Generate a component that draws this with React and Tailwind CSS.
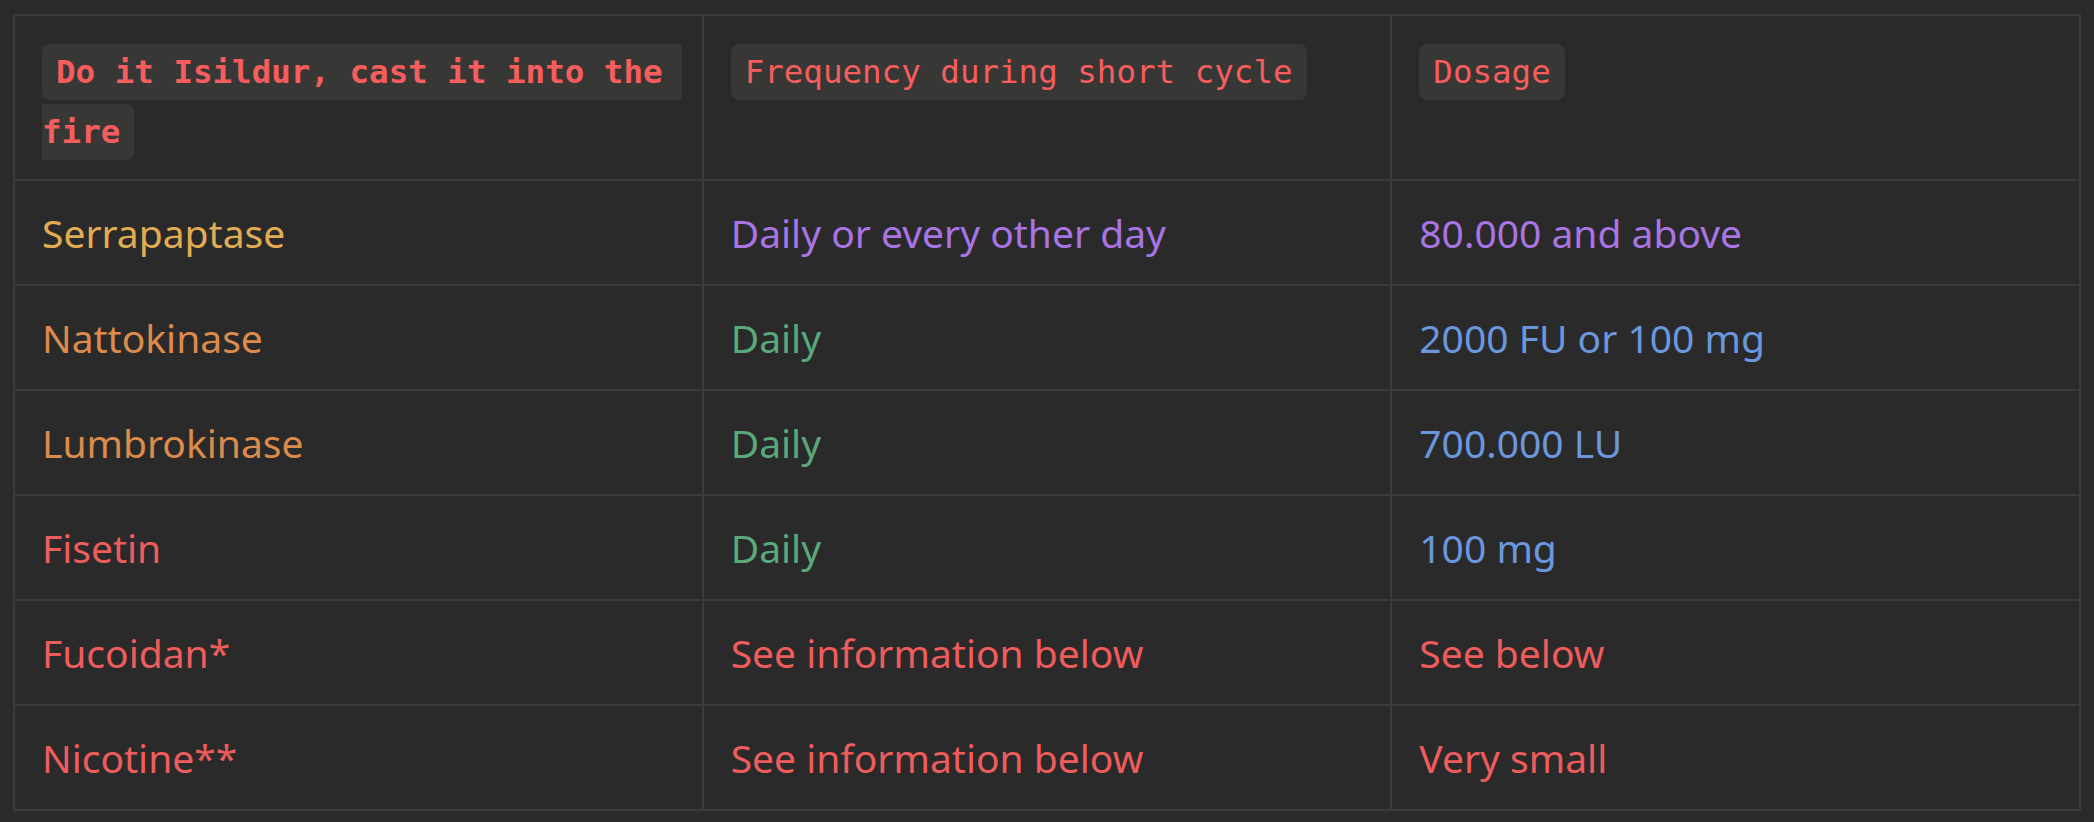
const rows = [
    { name: 'Serrapaptase', nameColor: 'text-[#e2ac52]', freq: 'Daily or every other day', freqColor: 'text-[#a974e3]', dose: '80.000 and above', doseColor: 'text-[#a974e3]' },
    { name: 'Nattokinase', nameColor: 'text-[#dd8a4d]', freq: 'Daily', freqColor: 'text-[#5aa97a]', dose: '2000 FU or 100 mg', doseColor: 'text-[#6a97de]' },
    { name: 'Lumbrokinase', nameColor: 'text-[#dd8a4d]', freq: 'Daily', freqColor: 'text-[#5aa97a]', dose: '700.000 LU', doseColor: 'text-[#6a97de]' },
    { name: 'Fisetin', nameColor: 'text-[#ee5c5c]', freq: 'Daily', freqColor: 'text-[#5aa97a]', dose: '100 mg', doseColor: 'text-[#6a97de]' },
    { name: 'Fucoidan*', nameColor: 'text-[#ee5c5c]', freq: 'See information below', freqColor: 'text-[#ee5c5c]', dose: 'See below', doseColor: 'text-[#ee5c5c]' },
    { name: 'Nicotine**', nameColor: 'text-[#ee5c5c]', freq: 'See information below', freqColor: 'text-[#ee5c5c]', dose: 'Very small', doseColor: 'text-[#ee5c5c]' },
];

function Code({ children, bold }) {
    return (
        <code
            className={`whitespace-pre-wrap rounded-[8px] bg-[#373735] px-[14px] py-[9px] font-['DejaVu_Sans_Mono',monospace] text-[32.5px] leading-[60px] text-[#f75d5d] ${bold ? 'font-bold' : 'font-normal'}`}
        >
            {children}
        </code>
    );
}

function Th({ children }) {
    return (
        <th className="w-1/3 border-2 border-[#3b3b3b] px-[27px] pt-[26px] pb-[17px] text-left align-top font-['DejaVu_Sans_Mono',monospace] text-[32.5px] leading-[60px] font-normal">
            {children}
        </th>
    );
}

function Td({ children, className }) {
    return (
        <td className={`border-2 border-[#3b3b3b] px-[27px] py-[25px] text-[39px] leading-[53px] ${className}`}>
            {children}
        </td>
    );
}

export default function App() {
    return (
        <div className="min-h-screen w-full bg-[#2a2a2a] px-[13px] pt-[14px] pb-[11px] font-['Noto_Sans',sans-serif]">
            <table className="w-full table-fixed border-collapse">
                <thead>
                    <tr>
                        <Th>
                            <Code bold>Do it Isildur, cast it into the fire</Code>
                        </Th>
                        <Th>
                            <Code>Frequency during short cycle</Code>
                        </Th>
                        <Th>
                            <Code>Dosage</Code>
                        </Th>
                    </tr>
                </thead>
                <tbody>
                    {rows.map((row) => (
                        <tr key={row.name}>
                            <Td className={row.nameColor}>{row.name}</Td>
                            <Td className={row.freqColor}>{row.freq}</Td>
                            <Td className={row.doseColor}>{row.dose}</Td>
                        </tr>
                    ))}
                </tbody>
            </table>
        </div>
    );
}
